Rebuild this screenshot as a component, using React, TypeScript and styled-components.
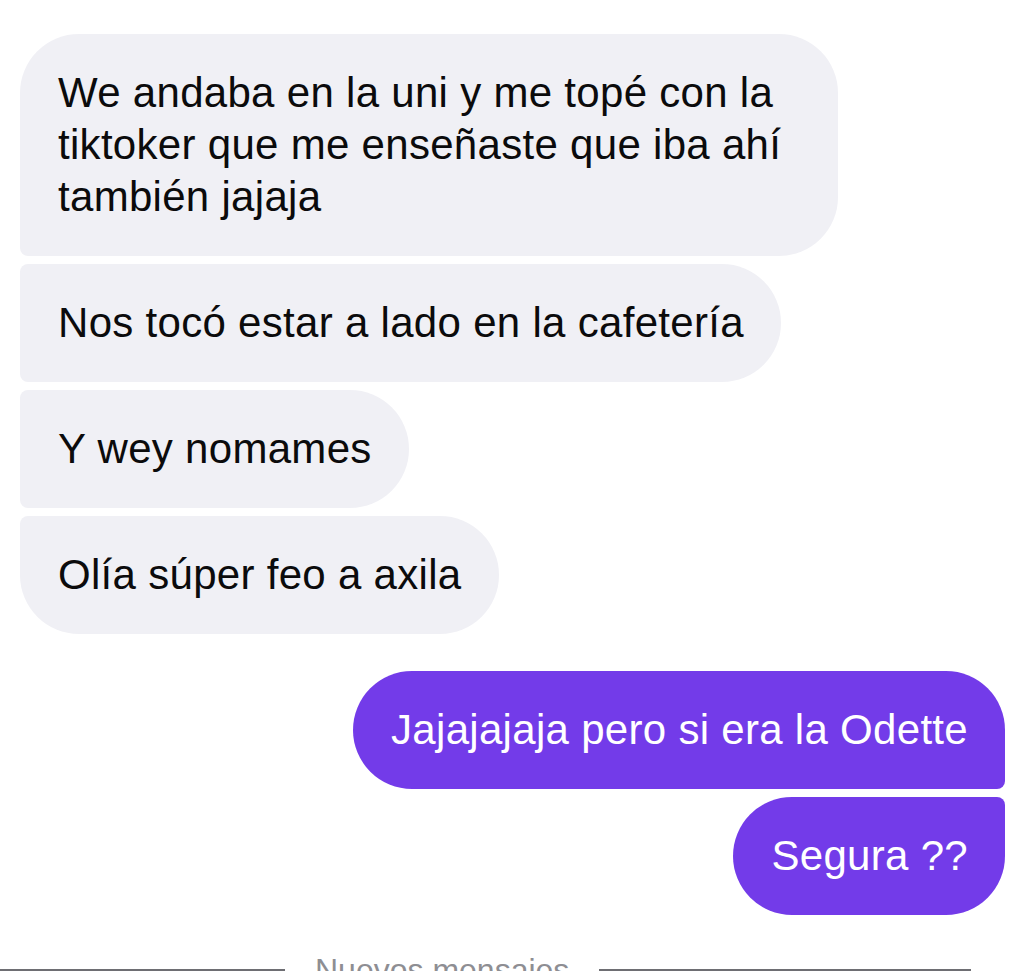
import React from 'react';
import styled, { createGlobalStyle } from 'styled-components';

const GlobalStyle = createGlobalStyle`
  html, body {
    margin: 0;
    padding: 0;
    background: #ffffff;
    overflow: hidden;
  }
  body {
    font-family: "Liberation Sans", Arial, Helvetica, sans-serif;
    -webkit-font-smoothing: antialiased;
  }
`;

const Thread = styled.div`
  display: flex;
  flex-direction: column;
  padding: 34px 26px 0 20px;
  width: 1031px;
  box-sizing: border-box;
`;

const Group = styled.div<{ $mine?: boolean }>`
  display: flex;
  flex-direction: column;
  align-items: ${(p) => (p.$mine ? 'flex-end' : 'flex-start')};
  gap: 8px;
  margin-top: ${(p) => (p.$mine ? '37px' : '0')};
`;

type Pos = 'first' | 'middle' | 'last';

const BIG = '59px';
const SMALL = '8px';

const radius = (mine: boolean, pos: Pos) => {
  // order: top-left top-right bottom-right bottom-left
  if (mine) {
    const tr = pos === 'first' ? BIG : SMALL;
    const br = pos === 'last' ? BIG : SMALL;
    return `${BIG} ${tr} ${br} ${BIG}`;
  }
  const tl = pos === 'first' ? BIG : SMALL;
  const bl = pos === 'last' ? BIG : SMALL;
  return `${tl} ${BIG} ${BIG} ${bl}`;
};

const Bubble = styled.div<{ $mine?: boolean; $pos: Pos }>`
  box-sizing: border-box;
  max-width: 818px;
  padding: 33px 37px 33px 38px;
  font-size: 42px;
  line-height: 52px;
  letter-spacing: 0.3px;
  background: ${(p) => (p.$mine ? '#733be9' : '#f0f0f5')};
  color: ${(p) => (p.$mine ? '#ffffff' : '#0b0b0c')};
  border-radius: ${(p) => radius(!!p.$mine, p.$pos)};
`;

const Divider = styled.div`
  display: flex;
  align-items: center;
  margin: 37px 0 0 -20px;
  width: 971px;
`;

const Rule = styled.div<{ $w?: number }>`
  height: 3px;
  background: #6e6e73;
  flex: ${(p) => (p.$w ? `0 0 ${p.$w}px` : '1')};
`;

const DividerLabel = styled.span`
  padding: 0 30px;
  font-size: 32px;
  line-height: 36px;
  color: #8e8e93;
  white-space: nowrap;
`;

const received = [
  'We andaba en la uni y me topé con la tiktoker que me enseñaste que iba ahí también jajaja',
  'Nos tocó estar a lado en la cafetería',
  'Y wey nomames',
  'Olía súper feo a axila',
];

const sent = ['Jajajajaja pero si era la Odette', 'Segura ??'];

const posOf = (i: number, n: number): Pos =>
  i === 0 ? 'first' : i === n - 1 ? 'last' : 'middle';

export default function App() {
  return (
    <>
      <GlobalStyle />
      <Thread>
        <Group>
          {received.map((t, i) => (
            <Bubble key={i} $pos={posOf(i, received.length)}>
              {t}
            </Bubble>
          ))}
        </Group>
        <Group $mine>
          {sent.map((t, i) => (
            <Bubble key={i} $mine $pos={posOf(i, sent.length)}>
              {t}
            </Bubble>
          ))}
        </Group>
        <Divider>
          <Rule $w={285} />
          <DividerLabel>Nuevos mensajes</DividerLabel>
          <Rule />
        </Divider>
      </Thread>
    </>
  );
}
